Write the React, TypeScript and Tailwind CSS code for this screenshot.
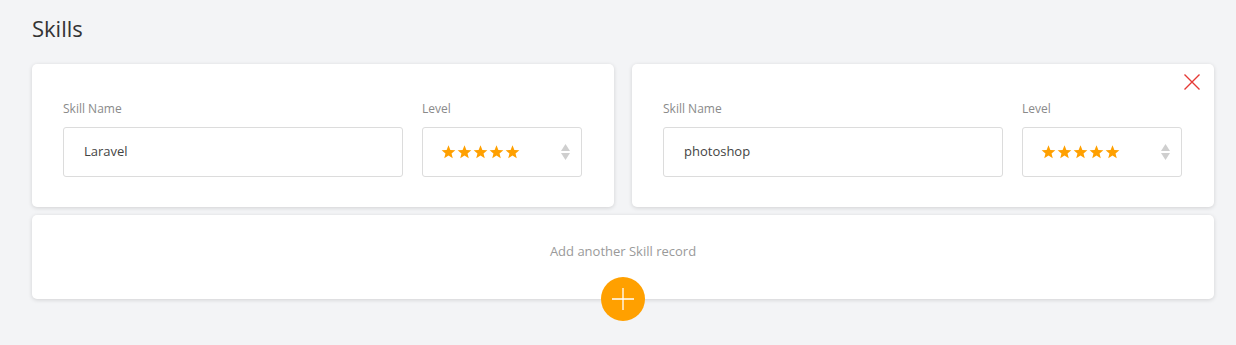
import React from "react";

type Skill = { name: string; level: number; removable?: boolean };

const skills: Skill[] = [
  { name: "Laravel", level: 5 },
  { name: "photoshop", level: 5, removable: true },
];

function Star() {
  return (
    <svg width="15" height="14" viewBox="0 0 24 23" className="block">
      <polygon
        points="12,0.5 15.1,8.1 23.3,8.6 17,13.8 19,21.8 12,17.4 5,21.8 7,13.8 0.7,8.6 8.9,8.1"
        fill="#ffa000"
      />
    </svg>
  );
}

function SkillCard({ skill }: { skill: Skill }) {
  return (
    <div className="relative bg-white rounded-[5px] shadow-[0_1px_4px_rgba(0,0,0,0.14)] pl-[31px] pr-[32px] pt-[36px] pb-[30px]">
      {skill.removable && (
        <button className="absolute top-[10px] right-[14px] w-4 h-4">
          <svg width="16" height="16" viewBox="0 0 16 16">
            <path d="M0.5 0.5 L15.5 15.5 M15.5 0.5 L0.5 15.5" stroke="#e53935" strokeWidth="1.4" />
          </svg>
        </button>
      )}
      <div className="flex gap-[19px]">
        <div className="w-[340px]">
          <label className="block text-[12px] leading-[18px] text-[#8a8a8a] mb-[9px]">Skill Name</label>
          <div className="h-[50px] border border-[#dcdcdc] rounded-[3px] flex items-center pl-5 text-[13px] text-[#444]">
            {skill.name}
          </div>
        </div>
        <div className="w-[160px]">
          <label className="block text-[12px] leading-[18px] text-[#8a8a8a] mb-[9px]">Level</label>
          <div className="h-[50px] border border-[#dcdcdc] rounded-[3px] flex items-center justify-between pl-[18px] pr-[11px]">
            <div className="flex gap-[1px]">
              {Array.from({ length: skill.level }).map((_, i) => (
                <Star key={i} />
              ))}
            </div>
            <svg width="9" height="16" viewBox="0 0 9 16">
              <polygon points="4.5,0 9,7 0,7" fill="#cfcfcf" />
              <polygon points="0,9 9,9 4.5,16" fill="#cfcfcf" />
            </svg>
          </div>
        </div>
      </div>
    </div>
  );
}

export default function App() {
  return (
    <div
      className="w-[1236px] h-[345px] bg-[#f3f4f6] pl-8 pr-[22px] pt-[13px]"
      style={{ fontFamily: '"Open Sans", sans-serif' }}
    >
      <h2 className="text-[22px] leading-[30px] text-[#333] mb-[21px]">Skills</h2>

      {/* Skill cards */}
      <div className="grid grid-cols-2 gap-[18px]">
        {skills.map((s) => (
          <SkillCard key={s.name} skill={s} />
        ))}
      </div>

      {/* Add record */}
      <div className="relative mt-2 h-[84px] bg-white rounded-[5px] shadow-[0_1px_4px_rgba(0,0,0,0.14)] flex justify-center pt-[27px]">
        <span className="text-[13px] leading-[18px] text-[#9a9a9a]">Add another Skill record</span>
        <button className="absolute left-1/2 -translate-x-1/2 -bottom-[22px] w-11 h-11 rounded-full bg-[#ffa000] flex items-center justify-center">
          <svg width="22" height="22" viewBox="0 0 22 22">
            <path d="M11 0 V22 M0 11 H22" stroke="#fff" strokeWidth="1.3" />
          </svg>
        </button>
      </div>
    </div>
  );
}
